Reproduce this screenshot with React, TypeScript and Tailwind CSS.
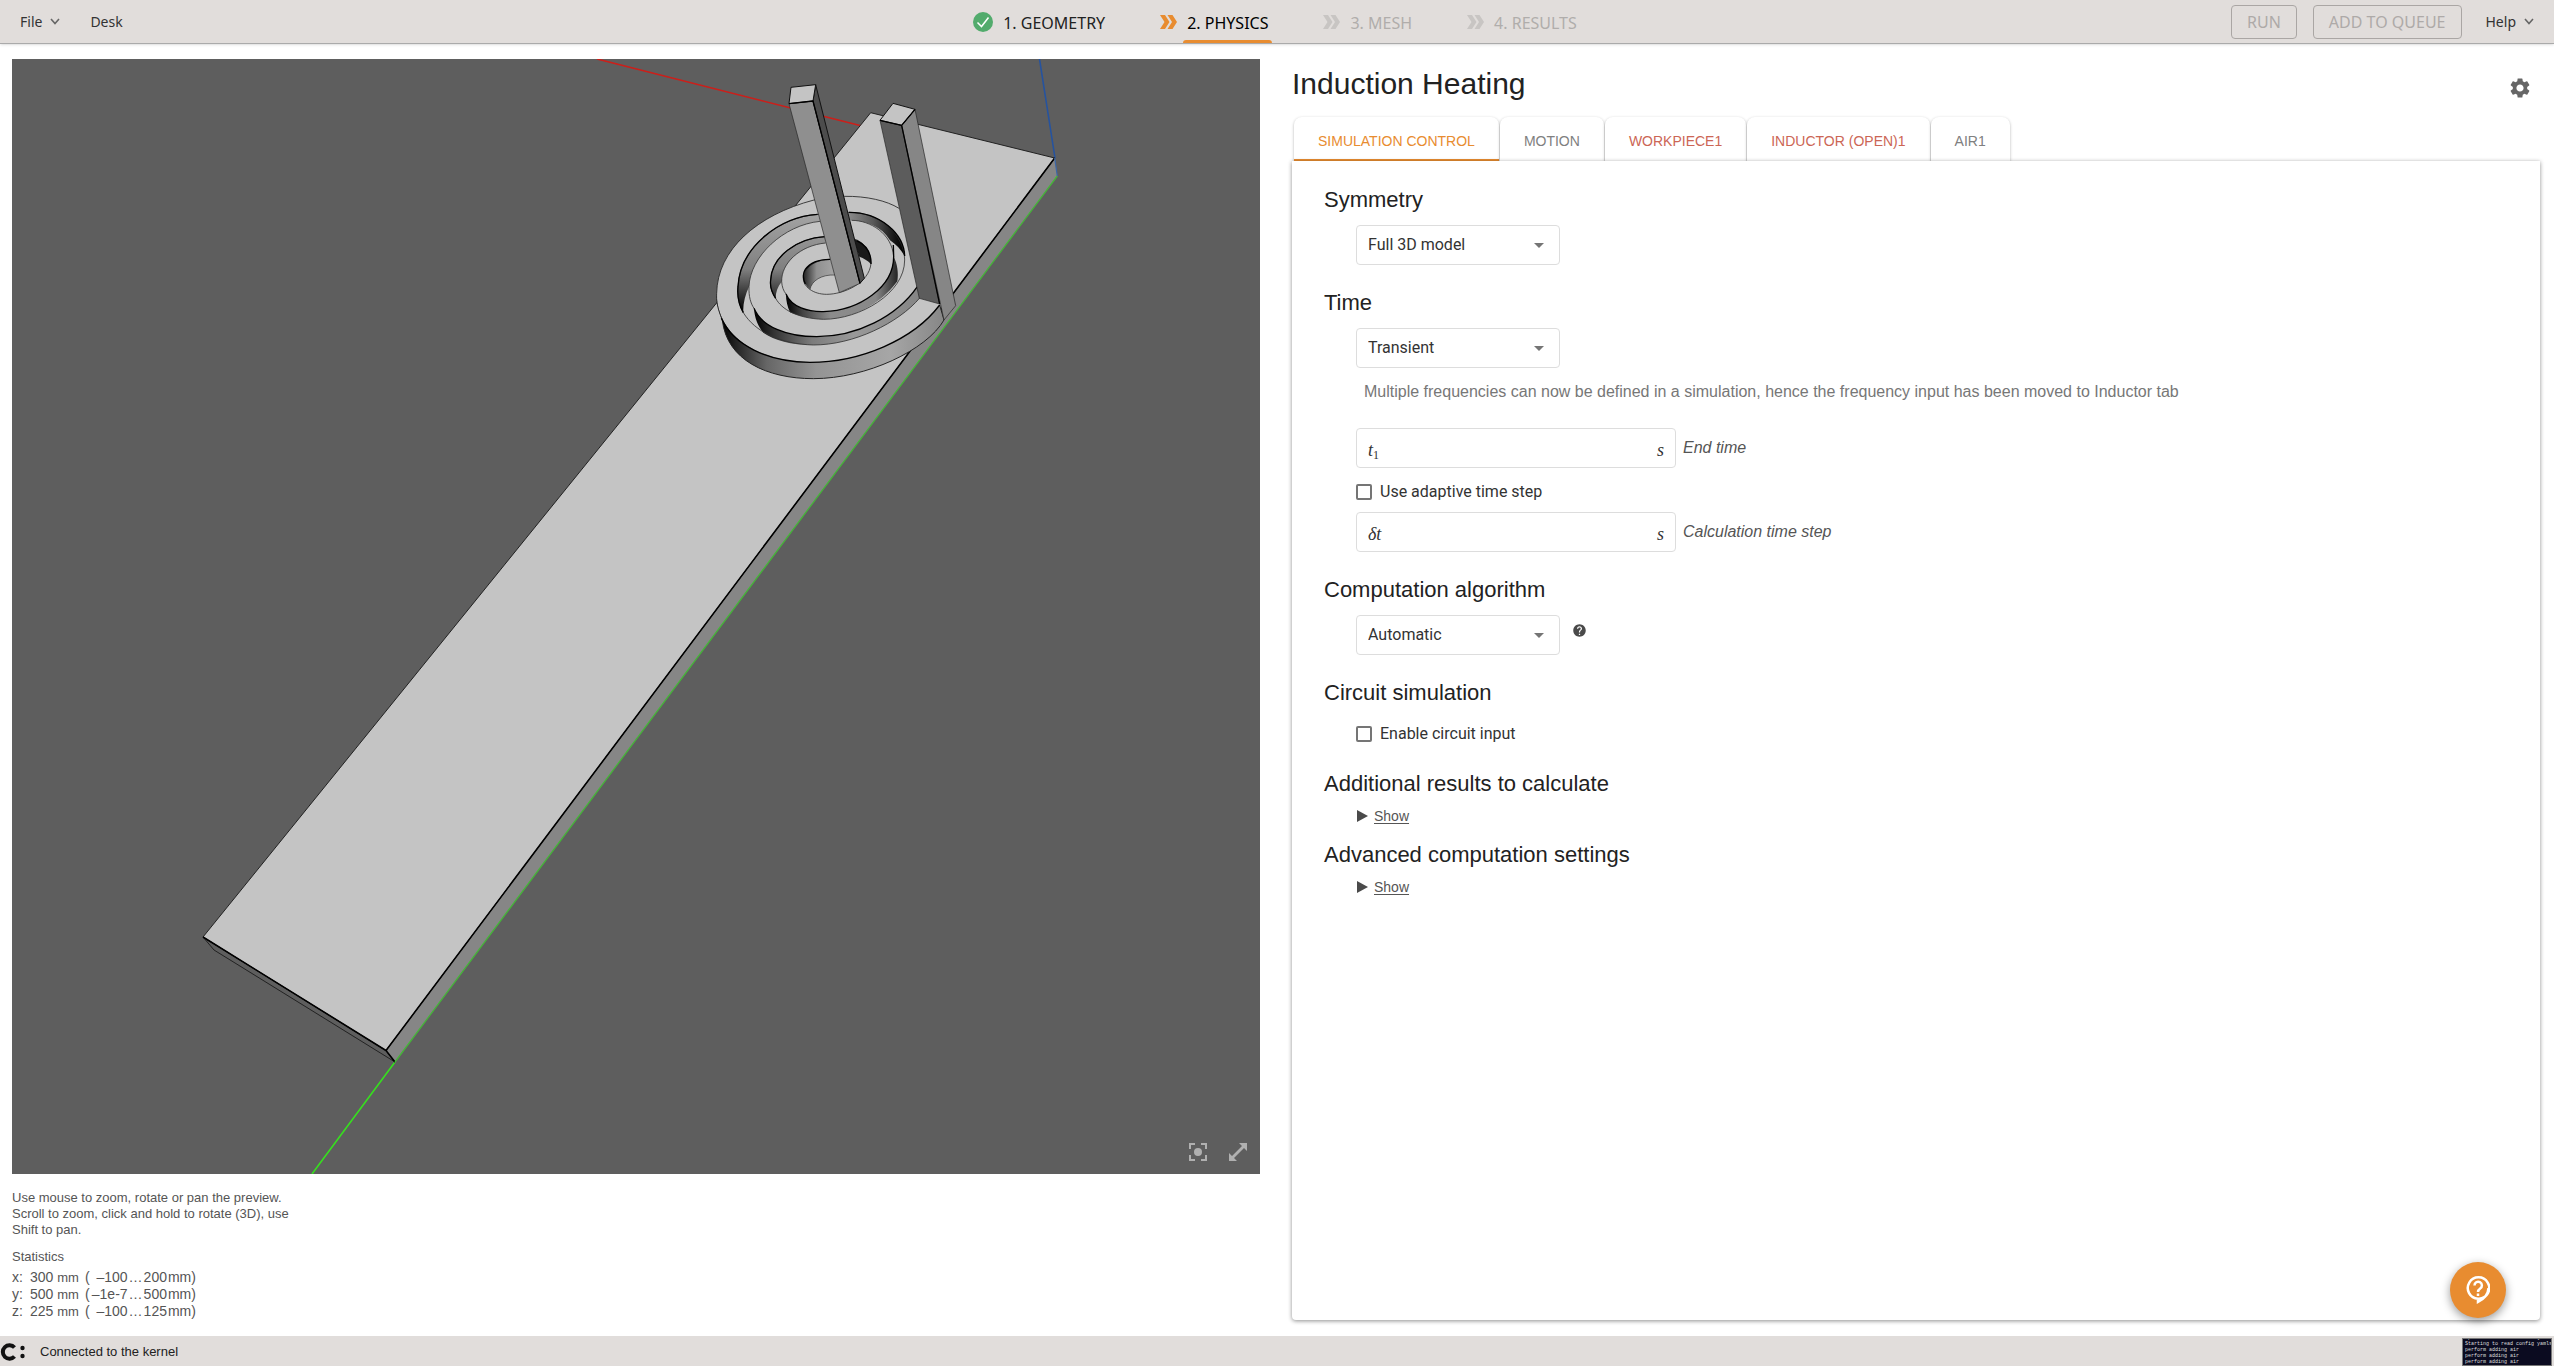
import { useState } from 'react';
import type { ReactNode } from 'react';
import { MdSettings, MdHelp, MdArrowDropDown } from 'react-icons/md';

const INNER_EDGE =
  'M720 713 C655 790 520 855 400 855 C300 852 225 815 190 758 C174 730 172 700 174 680 C180 560 300 470 413 463 L507 457 C600 457 672 520 674 600 C674 700 540 778 430 778 C350 775 305 748 287 715 C272 690 270 675 272 660 C275 590 350 535 435 530 L520 536 C555 546 574 580 573 610 C568 670 490 703 440 703 C400 703 368 680 370 652 C376 615 415 598 450 598';
const CHANNELS =
  INNER_EDGE +
  ' L540 595 L530 548 L437 549 C360 556 303 610 305 665 C306 725 370 756 430 755 C540 752 641 680 641 590 C636 520 570 481 515 481 L420 484 C310 495 210 590 207 680 C205 770 300 830 410 830 C530 830 650 770 712 680 Z';

const steps = [
  { name: '1. GEOMETRY', state: 'done' },
  { name: '2. PHYSICS', state: 'active' },
  { name: '3. MESH', state: 'todo' },
  { name: '4. RESULTS', state: 'todo' },
];

const tabs = [
  { name: 'SIMULATION CONTROL', color: 'text-[#e88c30]' },
  { name: 'MOTION', color: 'text-[#808080]' },
  { name: 'WORKPIECE1', color: 'text-[#cc6655]' },
  { name: 'INDUCTOR (OPEN)1', color: 'text-[#cc6655]' },
  { name: 'AIR1', color: 'text-[#808080]' },
];

const stats = [
  { axis: 'x:', size: '300', from: '–100', to: '200' },
  { axis: 'y:', size: '500', from: '–1e-7', to: '500' },
  { axis: 'z:', size: '225', from: '–100', to: '125' },
];

function Caret() {
  return (
    <svg width="10" height="7" viewBox="0 0 10 7" fill="none" stroke="#666" strokeWidth="1.6">
      <path d="M1 1l4 4.5L9 1" />
    </svg>
  );
}

function DoubleChevron() {
  return (
    <svg width="17" height="16" viewBox="0 0 17 16" fill="currentColor">
      <path d="M0 1h5l4.500 7L5 15H0l4.500-7z" />
      <path d="M7.500 1h5L17 8l-4.500 7h-5L12 8z" />
    </svg>
  );
}

function Model() {
  return (
    <svg
      className="absolute inset-0 w-full h-full"
      viewBox="12 59 1248 1115"
      preserveAspectRatio="xMidYMid slice"
    >
      <defs>
        <linearGradient id="outerWall" gradientUnits="userSpaceOnUse" x1="125" y1="0" x2="800" y2="0">
          <stop offset="0" stopColor="#000" />
          <stop offset=".06" stopColor="#222" />
          <stop offset=".2" stopColor="#666" />
          <stop offset=".42" stopColor="#949494" />
          <stop offset=".75" stopColor="#a6a6a6" />
          <stop offset="1" stopColor="#858585" />
        </linearGradient>
        <linearGradient id="leftWall" gradientUnits="userSpaceOnUse" x1="0" y1="755" x2="0" y2="470">
          <stop offset="0" stopColor="#000" />
          <stop offset=".18" stopColor="#333" />
          <stop offset=".45" stopColor="#808080" />
          <stop offset="1" stopColor="#a2a2a2" />
        </linearGradient>
        <linearGradient id="rightWall" gradientUnits="userSpaceOnUse" x1="500" y1="0" x2="674" y2="0">
          <stop offset="0" stopColor="#8e8e8e" />
          <stop offset=".45" stopColor="#5a5a5a" />
          <stop offset=".85" stopColor="#111" />
          <stop offset="1" stopColor="#000" />
        </linearGradient>
        <linearGradient id="middleWall" gradientUnits="userSpaceOnUse" x1="222" y1="0" x2="720" y2="0">
          <stop offset="0" stopColor="#000" />
          <stop offset=".12" stopColor="#333" />
          <stop offset=".35" stopColor="#7c7c7c" />
          <stop offset=".6" stopColor="#999" />
          <stop offset="1" stopColor="#858585" />
        </linearGradient>
        <linearGradient id="innerWall" gradientUnits="userSpaceOnUse" x1="318" y1="0" x2="655" y2="0">
          <stop offset="0" stopColor="#000" />
          <stop offset=".15" stopColor="#444" />
          <stop offset=".4" stopColor="#8c8c8c" />
          <stop offset=".8" stopColor="#888" />
          <stop offset="1" stopColor="#222" />
        </linearGradient>
        <linearGradient id="holeWall" gradientUnits="userSpaceOnUse" x1="370" y1="0" x2="470" y2="0">
          <stop offset="0" stopColor="#222" />
          <stop offset=".4" stopColor="#909090" />
          <stop offset="1" stopColor="#a8a8a8" />
        </linearGradient>
      </defs>

      {/* Axes */}
      <path d="M597 59L862 126" stroke="#cc1f1a" strokeWidth="1.6" />
      <path d="M1039.500 59L1055 158" stroke="#2553a0" strokeWidth="1.6" />
      <path d="M312 1174L395 1062" stroke="#36e01e" strokeWidth="1.6" />

      {/* Workpiece */}
      <g strokeLinejoin="round">
        <path d="M203 937L386 1050.500L395 1062L214 950Z" fill="#5e5e5e" stroke="#222" />
        <path d="M386 1050.500L1054.700 158L1057.300 176L395 1062Z" fill="#868686" />
        <path d="M203 937L870.700 112.700L1054.700 158L386 1050.500Z" fill="#c4c4c4" stroke="#222" />
        <path d="M203 937L386 1050.500L1054.700 158M386 1050.500L395 1062" stroke="#000" strokeWidth="1.6" fill="none" />
        <path d="M395 1062L1057.300 176" stroke="#45b538" strokeWidth="1.300" />
        <path d="M1054.700 158L1057.300 176" stroke="#3a66a8" strokeWidth="1.200" />
      </g>

      {/* Spiral inductor */}
      <g transform="translate(680 60) scale(.33333)" fill="none" strokeWidth="3" strokeLinejoin="round">
        <path
          d="M112 730 C125 780 127 775 127 780 C140 900 260 956 400 956 C560 956 740 870 792 780 L779 735 L500 800 Z"
          fill="url(#outerWall)"
          stroke="#222"
        />
        <path
          d="M779 735 C700 840 540 907 390 907 C230 905 110 825 110 700 C112 570 230 465 402 420 L493 409 C560 408 620 422 657 445 L760 600 Z"
          fill="#c4c4c4"
        />
        <path
          d="M127 780 C110 740 109 720 110 700 C112 570 230 465 402 420 L493 409 C560 408 620 422 657 445"
          stroke="#222"
          strokeWidth="2.500"
        />
        <path d="M779 735 C700 840 540 907 390 907 C260 905 160 855 124 775" stroke="#000" strokeWidth="4" />

        <path d={CHANNELS} fill="#c4c4c4" />
        <path
          d="M190 758 C174 730 172 700 174 680 C180 560 300 470 413 463 L420 484 C310 495 210 590 207 680 C195 705 188 735 190 758Z"
          fill="url(#leftWall)"
        />
        <path
          d="M500 457 C600 455 672 520 674 588 C662 568 648 553 630 541 C605 500 560 481 505 481Z"
          fill="url(#rightWall)"
        />
        <path
          d="M222 745 C245 800 320 830 410 830 C530 830 650 770 712 680 L720 713 C655 790 520 855 400 855 C330 854 285 842 250 818 C233 797 224 775 222 745Z"
          fill="url(#middleWall)"
        />
        <path
          d="M287 715 C270 690 270 675 272 660 C275 590 350 535 435 530 L437 549 C360 556 303 610 305 665 C293 680 287 695 287 715Z"
          fill="url(#leftWall)"
        />
        <path d="M520 536 C555 546 574 580 573 612 C562 601 552 595 538 590Z" fill="#1a1a1a" />
        <path
          d="M318 702 C335 742 385 756 430 755 C540 752 641 680 641 590 C652 610 656 640 652 664 C600 735 515 778 430 778 C390 777 355 768 330 757 C322 740 318 722 318 702Z"
          fill="url(#innerWall)"
        />
        <path
          d="M390 688 C368 670 366 645 376 628 C392 605 420 598 450 598 L465 645 C425 643 395 662 390 688Z"
          fill="url(#holeWall)"
        />
        <path d="M390 688 C395 662 425 643 465 645" stroke="#333" strokeWidth="2" />
        <path d={INNER_EDGE} stroke="#333" strokeWidth="2.500" />
        <path
          d="M437 549 C360 556 303 610 305 665 C306 680 310 692 318 702 M641 590 C636 520 570 481 515 481 M420 484 C310 495 210 590 207 680 C206 710 212 730 222 745"
          stroke="#333"
          strokeWidth="2.500"
        />
        <path
          d="M190 758 C174 730 172 700 174 680 C180 560 300 470 413 463 M507 457 C600 457 672 520 674 588 M287 715 C270 690 270 675 272 660 C275 590 350 535 435 530 M530 542 C560 556 574 580 573 612 M222 745 C245 800 320 830 410 830 C530 830 650 770 712 680 M318 702 C335 742 385 756 430 755 C540 752 641 680 641 590 L640 555 M376 672 C368 655 368 640 376 628 C392 605 420 598 450 598"
          stroke="#000"
          strokeWidth="4"
        />

        {/* Terminals */}
        <path d="M327 131L399 123L540 670L478 698Z" fill="#8f8f8f" stroke="#222" strokeWidth="2" />
        <path d="M399 123L407 74L553 655L540 670Z" fill="#4c4c4c" stroke="#111" />
        <path d="M333 82L407 74L399 123L327 131Z" fill="#c4c4c4" stroke="#111" />
        <path d="M327 131L399 123L540 670" stroke="#000" strokeWidth="4" />
        <path d="M600 181L665 196L779 732L718 715Z" fill="#5c5c5c" stroke="#222" strokeWidth="2" />
        <path d="M665 196L705 148L827 737L792 780Z" fill="#868686" stroke="#222" strokeWidth="2" />
        <path d="M639 130L705 148L665 196L600 181Z" fill="#c4c4c4" stroke="#111" />
        <path d="M600 181L665 196L779 732M665 196L705 148" stroke="#000" strokeWidth="4" />
      </g>
    </svg>
  );
}

function Header() {
  return (
    <header className="h-11 shrink-0 flex items-center justify-between bg-[#e1dddb] border-b border-[#aaa] shadow-sm px-5 font-['Noto_Sans','Open_Sans',sans-serif] text-sm text-[#333]">
      <nav className="flex-1 flex items-center gap-[30px]">
        <button className="flex items-center gap-2">
          File <Caret />
        </button>
        <button>Desk</button>
      </nav>

      <nav className="h-full flex items-center gap-[51px] text-base">
        {steps.map((step) => (
          <div
            key={step.name}
            className={`h-full flex items-center gap-[6px] ${step.state === 'todo' ? 'text-[#b0adab]' : 'text-[#222]'}`}
          >
            {step.state === 'done' ? (
              <svg width="20" height="20" viewBox="0 0 20 20">
                <circle cx="10" cy="10" r="10" fill="#52ab6c" />
                <path d="M4.500 10.500l4 4 7-9" fill="none" stroke="#fff" strokeWidth="1.500" />
              </svg>
            ) : (
              <span className={step.state === 'active' ? 'text-[#e88c30]' : 'text-[#c8c5c3]'}>
                <DoubleChevron />
              </span>
            )}
            <button
              className={`relative h-full px-1 pt-[2px] ${step.state === 'active' ? 'text-black' : ''}`}
              disabled={step.state === 'todo'}
            >
              {step.name}
              {step.state === 'active' && (
                <span className="absolute bottom-0 inset-x-0 h-[3px] rounded-t-[3px] bg-[#e88c30]" />
              )}
            </button>
          </div>
        ))}
      </nav>

      <div className="flex-1 flex items-center justify-end">
        <button disabled className="h-[34px] px-[15px] mr-4 border border-[#aaa6a4] rounded text-base text-[#aeaaa8]">
          RUN
        </button>
        <button disabled className="h-[34px] px-[15px] mr-6 border border-[#aaa6a4] rounded text-base text-[#aeaaa8]">
          ADD TO QUEUE
        </button>
        <button className="flex items-center gap-2">
          Help <Caret />
        </button>
      </div>
    </header>
  );
}

function Preview() {
  return (
    <section className="flex flex-col min-h-0 pt-[15px] pb-4 text-[13px] leading-4 text-[#555]">
      <div className="relative flex-1 min-h-0 overflow-hidden bg-[#5e5e5e]">
        <Model />
        <div className="absolute right-[13px] bottom-[13px] flex gap-[22px] text-[#b0b0b0]">
          <button aria-label="Fit view">
            <svg width="18" height="18" viewBox="0 0 18 18" fill="none" stroke="currentColor" strokeWidth="2">
              <path d="M1 6V1h5M12 1h5v5M17 12v5h-5M6 17H1v-5" />
              <circle cx="9" cy="9" r="4" fill="currentColor" stroke="none" />
            </svg>
          </button>
          <button aria-label="Full screen">
            <svg width="18" height="18" viewBox="0 0 18 18" fill="currentColor">
              <path d="M10 0h8v8l-3-3L5 15l3 3H0v-8l3 3L13 3z" />
            </svg>
          </button>
        </div>
      </div>

      <p className="mt-4 max-w-[290px]">
        Use mouse to zoom, rotate or pan the preview. Scroll to zoom, click and hold to rotate (3D), use Shift to pan.
      </p>
      <h3 className="mt-[11px]">Statistics</h3>
      <table className="mt-1 self-start leading-[17px] text-sm">
        <tbody>
          {stats.map((s) => (
            <tr key={s.axis}>
              <th className="w-[18px] p-0 text-left font-normal">{s.axis}</th>
              <td className="p-0 pr-[6px]">
                {s.size} <span className="text-[13px]">mm</span>
              </td>
              <td className="p-0">(</td>
              <td className="p-0 w-[38px] text-right">{s.from}</td>
              <td className="p-0 px-px">…</td>
              <td className="p-0">{s.to}</td>
              <td className="p-0 pl-px">mm)</td>
            </tr>
          ))}
        </tbody>
      </table>
    </section>
  );
}

function Section({ title, children }: { title: string; children: ReactNode }) {
  return (
    <section>
      <h2 className="mb-[11px] text-[22px] leading-7 text-[#222]">{title}</h2>
      <div className="pl-8">{children}</div>
    </section>
  );
}

function Select({ label, options }: { label: string; options: string[] }) {
  return (
    <div className="relative w-[204px]">
      <select
        aria-label={label}
        className="block w-full h-10 pl-[11px] pr-8 appearance-none bg-white border border-[#ddd] rounded font-[Roboto,sans-serif] text-base text-[#333]"
      >
        {options.map((o) => (
          <option key={o}>{o}</option>
        ))}
      </select>
      <MdArrowDropDown size={24} className="absolute right-[9px] top-2 text-[#757575] pointer-events-none" />
    </div>
  );
}

function TimeField({ id, symbol, label }: { id: string; symbol: ReactNode; label: string }) {
  return (
    <div className="flex items-center gap-[7px]">
      <div className="w-80 h-10 px-[11px] pt-1 flex items-center border border-[#ddd] rounded font-['Liberation_Serif',serif] text-lg text-[#333]">
        <span className="italic">{symbol}</span>
        <input id={id} className="flex-1 min-w-0 px-2 outline-none" />
        <span className="italic">s</span>
      </div>
      <label htmlFor={id} className="italic text-base text-[#555]">
        {label}
      </label>
    </div>
  );
}

function Checkbox({ label }: { label: string }) {
  return (
    <label className="flex items-center gap-2 font-[Roboto,sans-serif] text-base text-[#333]">
      <input
        type="checkbox"
        className="appearance-none w-4 h-4 border-2 border-[#757575] rounded-xs checked:bg-[#e88c30]"
      />
      {label}
    </label>
  );
}

function ShowLink() {
  return (
    <a href="#show" className="-mt-[3px] flex items-center gap-[6px] text-sm text-[#555] leading-5">
      <svg width="12" height="12" viewBox="0 0 12 12" fill="#4a4a4a">
        <path d="M1 0l11 6-11 6z" />
      </svg>
      <span className="underline underline-offset-2">Show</span>
    </a>
  );
}

function SimulationControl() {
  return (
    <div className="px-8 pt-[25px]">
      <div className="flex flex-col gap-6">
        <Section title="Symmetry">
          <Select label="Symmetry" options={['Full 3D model']} />
        </Section>
        <Section title="Time">
          <Select label="Time" options={['Transient']} />
          <p className="mt-3 mb-6 pl-2 text-base text-[#777]">
            Multiple frequencies can now be defined in a simulation, hence the frequency input has been moved to
            Inductor tab
          </p>
          <TimeField
            id="end-time"
            label="End time"
            symbol={
              <>
                t<sub className="not-italic text-xs">1</sub>
              </>
            }
          />
          <div className="h-11 pt-1 flex items-center">
            <Checkbox label="Use adaptive time step" />
          </div>
          <TimeField id="time-step" label="Calculation time step" symbol="δt" />
        </Section>
        <Section title="Computation algorithm">
          <div className="flex gap-3">
            <Select label="Computation algorithm" options={['Automatic']} />
            <MdHelp size={15} className="mt-2 text-[#4a4a4a]" />
          </div>
        </Section>
      </div>
      <div className="mt-6 mb-5">
        <Section title="Circuit simulation">
          <div className="h-8 flex items-center">
            <Checkbox label="Enable circuit input" />
          </div>
        </Section>
      </div>
      <div className="flex flex-col gap-[15px]">
        <Section title="Additional results to calculate">
          <ShowLink />
        </Section>
        <Section title="Advanced computation settings">
          <ShowLink />
        </Section>
      </div>
    </div>
  );
}

export default function App() {
  const [active, setActive] = useState('SIMULATION CONTROL');

  return (
    <div className="h-screen flex flex-col bg-white font-['Liberation_Sans',Arial,sans-serif]">
      <Header />

      <main className="flex-1 min-h-0 grid grid-cols-2 gap-8 pl-3 pr-[14px]">
        <Preview />

        <section className="flex flex-col min-h-0 pt-5 pb-4">
          <div className="flex items-center justify-between pr-2">
            <h1 className="text-[30px] leading-10 text-[#222]">Induction Heating</h1>
            <button aria-label="Settings" className="pt-2">
              <MdSettings size={24} className="text-[#666]" />
            </button>
          </div>

          <div className="mt-[13px] pl-[2px] flex gap-px">
            {tabs.map((tab) => (
              <button
                key={tab.name}
                onClick={() => setActive(tab.name)}
                className={`h-11 px-6 pt-[6px] rounded-t-lg shadow-[0_1px_3px_rgba(0,0,0,0.3)] text-sm bg-white border-b-2 ${tab.color} ${
                  active === tab.name ? 'border-[#e88c30]' : 'border-transparent'
                }`}
              >
                {tab.name}
              </button>
            ))}
          </div>

          <div className="relative flex-1 min-h-0 bg-white rounded-b shadow-[0_1px_4px_rgba(0,0,0,0.45)]">
            <SimulationControl />
            <button
              aria-label="Support"
              className="absolute right-[34px] bottom-[2px] w-14 h-14 flex items-center justify-center rounded-full bg-[#e88c30] text-white shadow-[0_3px_10px_rgba(0,0,0,0.4)]"
            >
              <svg width="24" height="28" viewBox="0 0 24 28" fill="none" stroke="currentColor" strokeWidth="2.500">
                <path d="M13 22.700a10.700 10.700 0 1 0-1 0V26q10-5 10.500-14" />
                <path d="M8.500 9.500a3.700 3.700 0 1 1 5.700 3Q12 14 12 16M12 17.500v2.500" />
              </svg>
            </button>
          </div>
        </section>
      </main>

      <footer className="h-[30px] shrink-0 flex items-center justify-between bg-[#e1dddb] text-[13px] text-[#222]">
        <div className="pt-[2px] flex items-center gap-[15px]">
          <svg width="25" height="18" viewBox="0 0 25 18" fill="none" stroke="#111" strokeWidth="4">
            <path d="M14.500 4.500a6.700 6.700 0 1 0 0 9" />
            <circle cx="22.500" cy="5" r="2.200" fill="#111" stroke="none" />
            <circle cx="22.500" cy="13" r="2.200" fill="#111" stroke="none" />
          </svg>
          Connected to the kernel
        </div>
        <div className="w-[90px] h-7 mt-[2px] mr-[2px] flex flex-col justify-end overflow-hidden whitespace-pre bg-[#0b0b20] border border-[#777] pl-[2px] font-['Liberation_Mono',monospace] text-[5px] leading-[6px] text-[#ddd]">
          <span>optional enabled is low [value</span>
          <span>Starting to read config yamls</span>
          <span>perform adding air</span>
          <span>perform adding air</span>
          <span>perform adding air</span>
        </div>
      </footer>
    </div>
  );
}
